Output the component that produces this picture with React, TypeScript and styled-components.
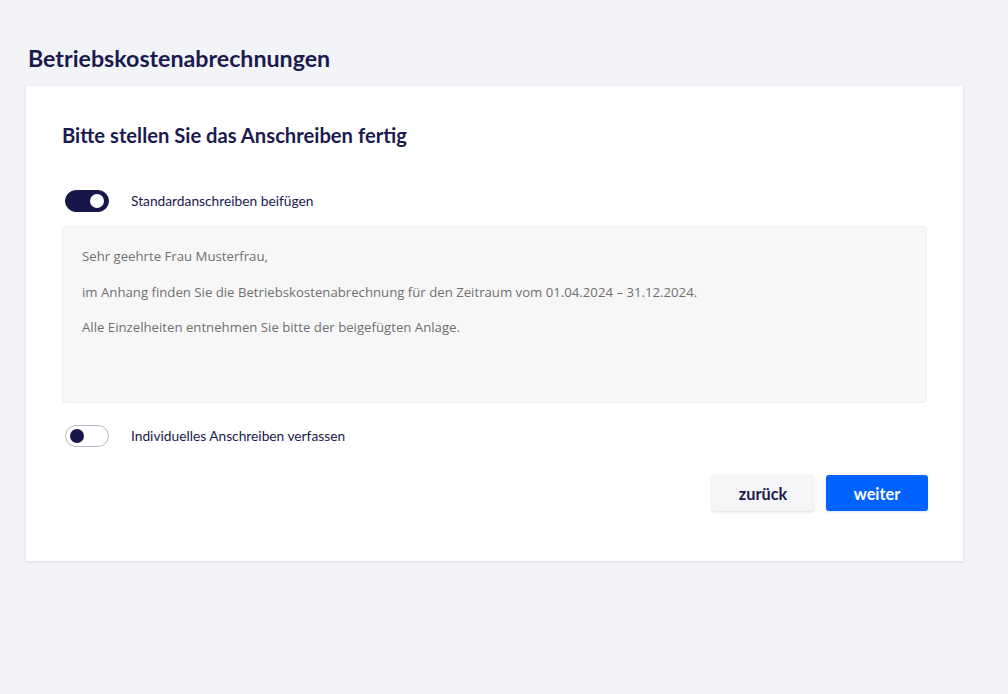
import React, { useState } from 'react';
import styled, { createGlobalStyle } from 'styled-components';

const GlobalStyle = createGlobalStyle`
  html, body {
    margin: 0;
    padding: 0;
    background: #f3f4f8;
  }
  body {
    font-family: Lato, "Open Sans", "Noto Sans", sans-serif;
    color: #1b1a4e;
  }
  * {
    box-sizing: border-box;
  }
`;

const Page = styled.div`
  min-height: 694px;
  padding: 43px 45px 0 26px;
`;

const PageTitle = styled.h1`
  margin: 0 0 12px 2px;
  font-size: 23.2px;
  line-height: 31px;
  font-weight: 700;
  color: #1b1a4e;
`;

const Card = styled.section`
  width: 937px;
  background: #fff;
  padding: 37px 35px 50px 36px;
  box-shadow: 0 1px 3px rgba(30, 30, 60, 0.12);
`;

const CardTitle = styled.h2`
  margin: 0 0 42px 0;
  font-size: 20.2px;
  line-height: 25px;
  font-weight: 700;
  color: #1b1a4e;
`;

const ToggleRow = styled.label`
  display: flex;
  align-items: center;
  gap: 22px;
  padding-left: 3px;
  cursor: pointer;
`;

const Track = styled.span<{ $on: boolean }>`
  position: relative;
  width: 44px;
  height: 22px;
  border-radius: 11px;
  flex-shrink: 0;
  background: ${(p) => (p.$on ? '#17164b' : '#fff')};
  border: 1px solid ${(p) => (p.$on ? '#17164b' : '#b9b9c4')};
`;

const Knob = styled.span<{ $on: boolean }>`
  position: absolute;
  top: 3px;
  left: ${(p) => (p.$on ? '24px' : '4px')};
  width: 14px;
  height: 14px;
  border-radius: 50%;
  background: ${(p) => (p.$on ? '#fff' : '#17164b')};
`;

const ToggleLabel = styled.span`
  font-size: 13.75px;
  line-height: 20px;
  color: #1b1a4e;
`;

const LetterBox = styled.div`
  margin: 14px 1px 22px 0;
  height: 177px;
  background: #f7f7f8;
  border: 1px solid #efeff2;
  border-radius: 4px;
  padding: 19px 19px;
  font-family: "Open Sans", "Noto Sans", sans-serif;
  font-size: 13.2px;
  line-height: 20px;
  color: #707070;
`;

const Para = styled.p`
  margin: 0 0 15.5px 0;
`;

const Actions = styled.div`
  display: flex;
  justify-content: flex-end;
  gap: 12px;
  margin-top: 28px;
`;

const Button = styled.button<{ $primary?: boolean }>`
  width: 102px;
  height: 36px;
  border: none;
  border-radius: 3px;
  font-family: Lato, "Open Sans", sans-serif;
  font-size: 16.3px;
  font-weight: 700;
  cursor: pointer;
  background: ${(p) => (p.$primary ? '#0062ff' : '#f5f5f7')};
  color: ${(p) => (p.$primary ? '#fff' : '#1b1a4e')};
  box-shadow: ${(p) =>
    p.$primary ? '0 1px 2px rgba(0, 50, 160, 0.15)' : '0 1px 3px rgba(30, 30, 60, 0.16)'};
`;

function Toggle({ on, onChange, label }: { on: boolean; onChange: () => void; label: string }) {
  return (
    <ToggleRow onClick={onChange}>
      <Track $on={on}>
        <Knob $on={on} />
      </Track>
      <ToggleLabel>{label}</ToggleLabel>
    </ToggleRow>
  );
}

export default function App() {
  const [standard, setStandard] = useState(true);
  const [custom, setCustom] = useState(false);

  return (
    <>
      <GlobalStyle />
      <Page>
        <PageTitle>Betriebskostenabrechnungen</PageTitle>
        <Card>
          <CardTitle>Bitte stellen Sie das Anschreiben fertig</CardTitle>
          <Toggle on={standard} onChange={() => setStandard(!standard)} label="Standardanschreiben beifügen" />
          <LetterBox>
            <Para>Sehr geehrte Frau Musterfrau,</Para>
            <Para>
              im Anhang finden Sie die Betriebskostenabrechnung für den Zeitraum vom 01.04.2024 – 31.12.2024.
            </Para>
            <Para>Alle Einzelheiten entnehmen Sie bitte der beigefügten Anlage.</Para>
          </LetterBox>
          <Toggle on={custom} onChange={() => setCustom(!custom)} label="Individuelles Anschreiben verfassen" />
          <Actions>
            <Button>zurück</Button>
            <Button $primary>weiter</Button>
          </Actions>
        </Card>
      </Page>
    </>
  );
}
